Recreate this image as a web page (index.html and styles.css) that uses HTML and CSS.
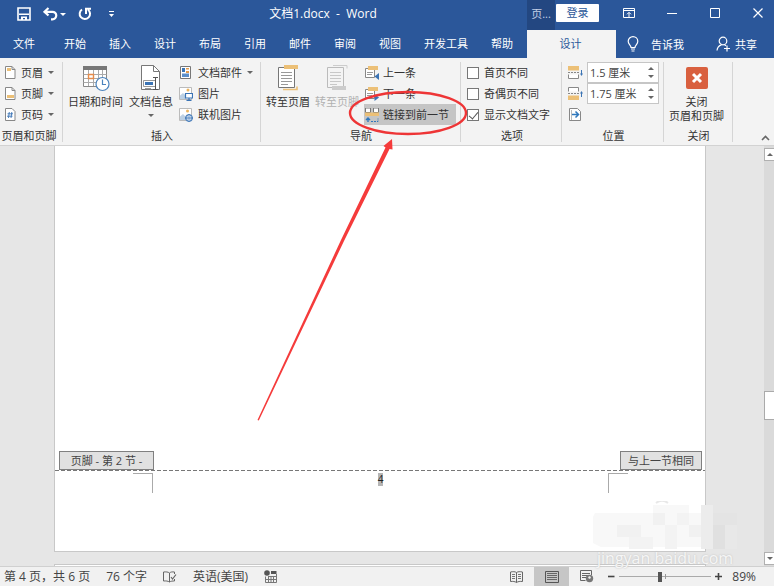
FILE: index.html
```html
<!DOCTYPE html>
<html lang="zh-CN">
  <head>
    <meta charset="utf-8">
    <title>文档1.docx - Word</title>
    <link rel="stylesheet" href="styles.css">
  </head>
  <body>
    <header class="titlebar">
      <div class="quick-access">
        <button type="button" aria-label="保存">
          <svg width="14" height="14" viewBox="0 0 14 14"><path d="M1 1h12v12H1z" fill="none" stroke="#fff" stroke-width="1.6"/><path d="M2 6.500h10v1.600H2zM4 9.500h6V13H8V11H6v2H4z" fill="#fff"/></svg>
        </button>
        <button type="button" class="undo" aria-label="撤消">
          <svg width="15" height="14" viewBox="0 0 15 14"><path d="M5.500 1L1.500 4.800l4 3.700M2 4.800h7.500a3.700 3.700 0 0 1 0 7.500H8" fill="none" stroke="#fff" stroke-width="2.200"/></svg>
          <span class="caret light"></span>
        </button>
        <button type="button" aria-label="恢复">
          <svg width="14" height="14" viewBox="0 0 14 14"><path d="M4 2.500A5.200 5.200 0 1 0 10 2.700M8 7V1.800h5" fill="none" stroke="#fff" stroke-width="2"/></svg>
        </button>
        <button type="button" class="customize" aria-label="自定义快速访问工具栏">
          <svg width="7" height="7" viewBox="0 0 7 7"><path d="M1 0.500h5" stroke="#fff"/><path d="M1 3h5L3.500 6z" fill="#fff"/></svg>
        </button>
      </div>
      <h1 class="doc-title">文档1.docx  -  Word</h1>
      <div class="title-right">
        <span class="context-label">页...</span>
        <button type="button" class="sign-in">登录</button>
        <div class="window-buttons">
          <button type="button" aria-label="功能区显示选项">
            <svg width="12" height="10" viewBox="0 0 12 10"><path d="M.5.5h11v9H.5zM.5 2.500h11M6 9V4.500M4 6.300L6 4.300l2 2" fill="none" stroke="#fff"/></svg>
          </button>
          <button type="button" aria-label="最小化">
            <svg width="12" height="10" viewBox="0 0 12 10"><path d="M1 5.500h10" stroke="#fff"/></svg>
          </button>
          <button type="button" aria-label="最大化">
            <svg width="12" height="10" viewBox="0 0 12 10"><path d="M1.500.5h9v9h-9z" fill="none" stroke="#fff"/></svg>
          </button>
          <button type="button" aria-label="关闭">
            <svg width="12" height="10" viewBox="0 0 12 10"><path d="M1.500.5l9 9M10.500.5l-9 9" stroke="#fff" stroke-width="1.200"/></svg>
          </button>
        </div>
      </div>
    </header>

    <nav class="tabs">
      <div class="tabs-main">
        <a href="#" class="file-tab">文件</a>
        <a href="#">开始</a>
        <a href="#">插入</a>
        <a href="#">设计</a>
        <a href="#">布局</a>
        <a href="#">引用</a>
        <a href="#">邮件</a>
        <a href="#">审阅</a>
        <a href="#">视图</a>
        <a href="#">开发工具</a>
        <a href="#">帮助</a>
      </div>
      <div class="tabs-right">
        <a href="#" class="active-tab">设计</a>
        <a href="#" class="tell-me">
          <svg width="12" height="16" viewBox="0 0 12 16"><path d="M4 11.500C4 9 1.200 8.500 1.200 5.300a4.800 4.600 0 0 1 9.600 0C10.800 8.500 8 9 8 11.500zM4 13h4M4.500 15h3" fill="none" stroke="#fff" stroke-width="1.200"/></svg>
          告诉我
        </a>
        <a href="#" class="share">
          <svg width="15" height="16" viewBox="0 0 15 16"><circle cx="7" cy="5" r="3.800" fill="none" stroke="#fff" stroke-width="1.200"/><path d="M1 14.500c.3-3 2-5 4.500-5.700M8.500 8.800l1.500 1M11 9.500v6M8 12.500h6" fill="none" stroke="#fff" stroke-width="1.200"/></svg>
          共享
        </a>
      </div>
    </nav>

    <section class="ribbon">
      <div class="group group-hf">
        <div class="group-body">
          <div class="rows">
            <button type="button" class="row">
              <svg width="12" height="14" viewBox="0 0 12 14"><path d="M1.500.5h6.500l3 3v9H1.500z" fill="#fff" stroke="#888"/><path d="M3 2h4v3H3z" fill="#ecc077"/><path d="M8 .5v3h3" fill="none" stroke="#888"/></svg>
              页眉 <span class="caret"></span>
            </button>
            <button type="button" class="row">
              <svg width="12" height="14" viewBox="0 0 12 14"><path d="M1.500.5h6.500l3 3v9H1.500z" fill="#fff" stroke="#888"/><path d="M3 8h7v3H3z" fill="#ecc077"/><path d="M8 .5v3h3" fill="none" stroke="#888"/></svg>
              页脚 <span class="caret"></span>
            </button>
            <button type="button" class="row">
              <svg width="12" height="14" viewBox="0 0 12 14"><path d="M1.500.5h6.500l3 3v9H1.500z" fill="#fff" stroke="#888"/><path d="M5.300 4l-.8 6M7.800 4L7 10M3.500 5.800h5.500M3 8.200h5.500" fill="none" stroke="#3b74b5" stroke-width=".9"/></svg>
              页码 <span class="caret"></span>
            </button>
          </div>
        </div>
        <div class="group-name">页眉和页脚</div>
      </div>

      <div class="group group-insert">
        <div class="group-body">
          <button type="button" class="big">
            <svg width="28" height="28" viewBox="0 0 28 28"><path d="M1.500 2.500h23v20h-23z" fill="#fff" stroke="#888"/><path d="M1 2h24v4H1z" fill="#777"/><path d="M1.500 10.500h23M1.500 14.500h23M1.500 18.500h23M6.500 6v16M11.500 6v16M16.500 6v16M20.500 6v16" stroke="#aaa"/><path d="M6.500 10.500h5v4h-5z" fill="#fff" stroke="#e58b4a" stroke-width="1.400"/><circle cx="20.500" cy="20" r="6.500" fill="#fff" stroke="#4a83bd" stroke-width="1.200"/><path d="M20.500 15.500v5H24" fill="none" stroke="#4a83bd" stroke-width="1.200"/></svg>
            日期和时间
          </button>
          <button type="button" class="big">
            <svg width="22" height="28" viewBox="0 0 22 28"><path d="M1.500 1.500h12l6 6v18h-18z" fill="#fff" stroke="#777"/><path d="M13.500 1.500v6h6" fill="none" stroke="#777"/><path d="M3.500 16.500h12v6h-12z" fill="#fff" stroke="#999"/><path d="M5 18h8v3H5z" fill="#3b74b5"/><path d="M5 24.500h6" stroke="#999"/><path d="M13 13.500h5M15.500 13.500v12M13 25.500h5" stroke="#555"/></svg>
            文档信息
            <span class="caret"></span>
          </button>
          <div class="rows">
            <button type="button" class="row">
              <svg width="14" height="14" viewBox="0 0 14 14"><path d="M1.500.5h10v12h-10z" fill="#fff" stroke="#777"/><path d="M3 2h3v4H3z" fill="#3b74b5"/><path d="M3 7.500h7V11H3z" fill="#5c8fca"/><path d="M7 2h3v1.500H7zM7 5h3v2H7z" fill="#e59b4a"/></svg>
              文档部件 <span class="caret"></span>
            </button>
            <button type="button" class="row">
              <svg width="14" height="14" viewBox="0 0 14 14"><path d="M.5.5h12v12H.5z" fill="#fff" stroke="#bbb"/><path d="M1 12V8.500L4 6l3 3v3z" fill="#bcd0e4"/><circle cx="9" cy="3" r="1.500" fill="#ecb560"/><path d="M6.500 6.500h7v4.500h-7zM10 11v2M7.500 13.300h5" fill="#fff" stroke="#3b74b5" stroke-width="1.200"/></svg>
              图片
            </button>
            <button type="button" class="row">
              <svg width="14" height="14" viewBox="0 0 14 14"><path d="M.5.5h12v12H.5z" fill="#fff" stroke="#bbb"/><path d="M1 12V8.500L4 6l3 3v3z" fill="#bcd0e4"/><circle cx="8.500" cy="3" r="1.500" fill="#ecb560"/><circle cx="10" cy="10" r="3.500" fill="#fff" stroke="#3b74b5"/><path d="M6.500 10h7M10 6.500v7M8.500 7c-1 2-1 4 0 6M11.500 7c1 2 1 4 0 6" fill="none" stroke="#3b74b5" stroke-width=".8"/></svg>
              联机图片
            </button>
          </div>
        </div>
        <div class="group-name">插入</div>
      </div>

      <div class="group group-nav">
        <div class="group-body">
          <button type="button" class="big">
            <svg width="22" height="28" viewBox="0 0 22 28"><path d="M1.500 3.500h16v20h-16z" fill="#fff" stroke="#777"/><path d="M7 1h14v4H7z" fill="#ecc077"/><path d="M4 8.500h11M4 11.500h11M4 14.500h11M4 17.500h11M4 20.500h7" stroke="#999"/><path d="M6 25.500h14v-3" fill="none" stroke="#ecc077" stroke-width="1.600"/></svg>
            转至页眉
          </button>
          <button type="button" class="big" disabled>
            <svg width="22" height="28" viewBox="0 0 22 28"><path d="M1.500 3.500h16v20h-16z" fill="#f4f4f4" stroke="#bbb"/><path d="M7 1.500h14v3" fill="none" stroke="#ccc"/><path d="M4 8.500h11M4 11.500h11M4 14.500h11M4 17.500h11M4 20.500h7" stroke="#c8c8c8"/><path d="M6 22h14v4H6z" fill="#ccc"/></svg>
            转至页脚
          </button>
          <div class="rows">
            <button type="button" class="row">
              <svg width="14" height="14" viewBox="0 0 14 14"><path d="M.5 2.500h9v9h-9z" fill="#fff" stroke="#888"/><path d="M3 0h10v4H3z" fill="#ecc077"/><path d="M2 6.500h6M2 8.500h5" stroke="#999"/><path d="M14 7v7l-4.500-3.500z" fill="#3b74b5"/></svg>
              上一条
            </button>
            <button type="button" class="row">
              <svg width="14" height="14" viewBox="0 0 14 14"><path d="M.5 2.500h9v9h-9z" fill="#fff" stroke="#888"/><path d="M3 0h10v4H3z" fill="#ecc077"/><path d="M2 6.500h6M2 8.500h5" stroke="#999"/><path d="M9.500 7v7l4.500-3.500z" fill="#3b74b5"/></svg>
              下一条
            </button>
            <button type="button" class="row pressed" aria-pressed="true">
              <svg width="14" height="14" viewBox="0 0 14 14"><path d="M.5 0h5v4.500h-5zM8.500 0h5v4.500h-5z" fill="#fff" stroke="#777"/><path d="M0 4.500h14V8H0z" fill="#ecc077"/><path d="M3 14v-4M1 12l2-2 2 2" fill="none" stroke="#2f78bd" stroke-width="1.400"/><path d="M6 13.500h7v-3" fill="none" stroke="#2f78bd" stroke-dasharray="2 1"/></svg>
              链接到前一节
            </button>
          </div>
        </div>
        <div class="group-name">导航</div>
      </div>

      <div class="group group-options">
        <div class="group-body">
          <div class="rows">
            <label class="row"><input type="checkbox"> 首页不同</label>
            <label class="row"><input type="checkbox"> 奇偶页不同</label>
            <label class="row"><input type="checkbox" checked> 显示文档文字</label>
          </div>
        </div>
        <div class="group-name">选项</div>
      </div>

      <div class="group group-position">
        <div class="group-body">
          <div class="rows">
            <div class="row">
              <svg width="16" height="14" viewBox="0 0 16 14"><path d="M0 0h11v4.500H0z" fill="#ecc077"/><path d="M0 6.500h11" stroke="#888" stroke-dasharray="2 1"/><path d="M.5 8.500v4h10v-4" fill="#fff" stroke="#888"/><path d="M13.500 4v5" stroke="#3b74b5"/><path d="M12 7.500h3l-1.500 2.500z" fill="#3b74b5"/></svg>
              <div class="spinner">
                <input type="text" value="1.5 厘米" aria-label="页眉顶端距离">
                <div class="steps">
                  <button type="button" aria-label="增加"><span class="caret up"></span></button>
                  <button type="button" aria-label="减少"><span class="caret"></span></button>
                </div>
              </div>
            </div>
            <div class="row">
              <svg width="16" height="14" viewBox="0 0 16 14"><path d="M.5 4.500v-4h10v4" fill="#fff" stroke="#888"/><path d="M0 6.500h11" stroke="#888" stroke-dasharray="2 1"/><path d="M0 8.500h11V13H0z" fill="#ecc077"/><path d="M13.500 5v5" stroke="#3b74b5"/><path d="M12 6.500h3l-1.500-2.500z" fill="#3b74b5"/></svg>
              <div class="spinner">
                <input type="text" value="1.75 厘米" aria-label="页脚底端距离">
                <div class="steps">
                  <button type="button" aria-label="增加"><span class="caret up"></span></button>
                  <button type="button" aria-label="减少"><span class="caret"></span></button>
                </div>
              </div>
            </div>
            <button type="button" class="row" aria-label="插入对齐制表符">
              <svg width="16" height="14" viewBox="0 0 16 14"><path d="M1.500.5h8l3 3v9h-11z" fill="#fff" stroke="#888"/><path d="M3.500 2v10" stroke="#bbb"/><path d="M4 6.500h6.500M7.500 3.500l3 3-3 3" fill="none" stroke="#2f78bd" stroke-width="1.500"/></svg>
            </button>
          </div>
        </div>
        <div class="group-name">位置</div>
      </div>

      <div class="group group-close">
        <div class="group-body">
          <button type="button" class="big">
            <svg width="24" height="28" viewBox="0 0 24 28"><rect x="1" y="3" width="22" height="22" rx="2" fill="#d9603f"/><path d="M8 10l8 8M16 10l-8 8" stroke="#fff" stroke-width="3"/></svg>
            <span class="two-lines">关闭<br>页眉和页脚</span>
          </button>
        </div>
        <div class="group-name">关闭</div>
      </div>

      <button type="button" class="collapse" aria-label="折叠功能区">
        <svg width="9" height="6" viewBox="0 0 9 6"><path d="M1 5l3.500-3.500L8 5" fill="none" stroke="#666" stroke-width="1.600"/></svg>
      </button>
    </section>

    <main class="workspace">
      <div class="pages">
        <article class="page">
          <div class="page-body"></div>
          <div class="footer-tags">
            <span class="tag tag-footer">页脚 - 第 2 节 -</span>
            <span class="tag">与上一节相同</span>
          </div>
          <div class="footer-area">
            <span class="corner corner-left"></span>
            <span class="page-number">4</span>
            <span class="corner corner-right"></span>
          </div>
        </article>
        <article class="page next-page"></article>
      </div>
      <div class="scrollbar">
        <button type="button" aria-label="向上滚动"><span class="caret up"></span></button>
        <div class="track-above"></div>
        <div class="thumb"></div>
        <div class="track-below"></div>
        <button type="button" aria-label="向下滚动"><span class="caret"></span></button>
      </div>
      <div class="watermark">
        <svg width="144" height="48" viewBox="0 0 144 48">
          <path d="M63 2c4-3 8-3 12 0" fill="none" stroke="#e8e8e8" stroke-width="2"/>
          <path d="M2 12h118v34H8l-8-4V16z" fill="#f8f8f8"/>
          <path d="M60 4h36v8H60zM108 4h12v8h-12z" fill="#f8f8f8"/>
          <path d="M24 24h24v12H24zM60 12h12v12H60zM96 24h12v12H96z" fill="#f1f1f1"/>
          <path d="M36 36h24v12H36zM72 24h12v24H72zM84 12h12v12H84z" fill="#f3f3f3"/>
          <path d="M108 4h12v44h-12z" fill="#ececec"/>
          <path d="M120 12h24v12h-24z" fill="#e4e4e4"/>
          <path d="M120 24h12v24h-12z" fill="#e0e0e0"/>
          <path d="M132 24h12v24h-12z" fill="#e8e8e8"/>
        </svg>
        <span>jingyan.baidu.com</span>
      </div>
    </main>

    <footer class="statusbar">
      <span>第 4 页，共 6 页</span>
      <span>76 个字</span>
      <svg width="14" height="12" viewBox="0 0 14 12"><path d="M6.500 2v9M6.500 2C5 .8 3 .8.500 1v9c2.500-.2 4.500 0 6 1 1.500-1 3-1 5-1V8M6.500 2C8 .8 9 .8 11.500 1v2" fill="none" stroke="#666"/><path d="M8 6l1.500 2L13 3.500" fill="none" stroke="#666" stroke-width="1.200"/></svg>
      <span>英语(美国)</span>
      <svg width="13" height="13" viewBox="0 0 13 13"><circle cx="3" cy="3" r="2.800" fill="#555"/><path d="M7 1h5.500v3H7z" fill="#555"/><path d="M1.500 6.500v6h11V4M4 6.500h8M2 9.500h10M4.500 6v6M7 6v6M9.500 6v6" fill="none" stroke="#777"/></svg>
      <div class="views">
        <button type="button" aria-label="阅读视图">
          <svg width="13" height="12" viewBox="0 0 13 12"><path d="M6.500 1.500v10M6.500 1.500C5 .5 3 .5.500 1v9.500c2.500-.3 4.500 0 6 1 1.500-1 3.500-1.300 6-1V1c-2.500-.5-4.500-.5-6 .5" fill="none" stroke="#666"/><path d="M2 3.500h3M2 5.500h3M2 7.500h3M8 3.500h3M8 5.500h3M8 7.500h3" stroke="#777"/></svg>
        </button>
        <button type="button" class="current" aria-label="页面视图">
          <svg width="14" height="12" viewBox="0 0 14 12"><path d="M.5.5h13v11H.5z" fill="none" stroke="#555"/><path d="M2 2.500h10M2 4.500h10M2 6.500h10M2 8.500h10" stroke="#666"/></svg>
        </button>
        <button type="button" aria-label="Web 版式视图">
          <svg width="14" height="13" viewBox="0 0 14 13"><path d="M11.500 5V.5H.5v10h5M2 3.500h8M2 5.500h6M2 7.500h4" fill="none" stroke="#666"/><circle cx="9.500" cy="8.500" r="3.700" fill="#777"/><path d="M8 7l2-1 1 2-2 1z" fill="#f1f1f1"/></svg>
        </button>
      </div>
      <div class="zoom">
        <button type="button" aria-label="缩小"><svg width="7" height="7" viewBox="0 0 7 7"><path d="M0 3.500h6.500" stroke="#444" stroke-width="1.600"/></svg></button>
        <input type="range" min="0" max="100" value="44" aria-label="显示比例">
        <button type="button" aria-label="放大"><svg width="7" height="7" viewBox="0 0 7 7"><path d="M0 3.500h7M3.500 0v7" stroke="#444" stroke-width="1.600"/></svg></button>
        <span class="percent">89%</span>
      </div>
    </footer>

    <svg class="markup" width="774" height="586" viewBox="0 0 774 586">
      <ellipse cx="408" cy="113" rx="58" ry="21" fill="none" stroke="#ee3536" stroke-width="2.400"/>
      <path d="M257.500 420L341 240L385.500 147.500L383.500 146L392 139L392.500 149.500L389.500 149L344 241L258.800 420.500z" fill="#f53b3b"/>
    </svg>
  </body>
</html>
```
FILE: styles.css
```css
* {
  box-sizing: border-box;
}
body {
  display: flex;
  flex-direction: column;
  position: relative;
  height: 100vh;
  margin: 0;
  overflow: hidden;
  font: 11px/16px "Open Sans", "Noto Sans CJK SC", sans-serif;
  color: #333;
  background: #e6e6e6;
}
button, input {
  font: inherit;
  color: inherit;
}
button {
  padding: 0;
  border: 0;
  background: none;
}
a {
  color: #fff;
  text-decoration: none;
}
svg {
  display: block;
  flex: none;
}
.caret {
  display: block;
  flex: none;
  border: 3px solid transparent;
  border-top-color: #666;
  border-bottom: 0;
}
.caret.up {
  border-top: 0;
  border-bottom: 3px solid #666;
}
.caret.light {
  border-top-color: #fff;
}

/* title bar */
.titlebar {
  display: flex;
  flex: none;
  height: 30px;
  color: #fff;
  background: #2b579a;
}
.quick-access {
  display: flex;
  align-items: center;
  gap: 12px;
  padding: 0 0 2px 17px;
}
.undo {
  display: flex;
  align-items: center;
  gap: 2px;
}
.customize {
  margin-left: 4px;
}
.doc-title {
  flex: 1;
  margin: 0;
  padding-left: 4px;
  font-size: 12px;
  font-weight: normal;
  line-height: 28px;
  text-align: center;
  white-space: pre;
}
.title-right {
  display: flex;
  width: 247px;
}
.context-label {
  width: 28px;
  line-height: 28px;
  text-align: center;
  color: #c3d0e6;
  background: #234781;
}
.sign-in {
  width: 43px;
  height: 18px;
  margin: 4px 0 0 1px;
  color: #2b579a;
  background: #fff;
  border-radius: 1px;
}
.window-buttons {
  display: flex;
  flex: 1;
  align-items: center;
  justify-content: flex-end;
  gap: 31px;
  padding: 0 10px 4px 0;
}

/* tab strip */
.tabs {
  display: flex;
  flex: none;
  height: 28px;
  line-height: 27px;
  background: #2b579a;
}
.tabs-main {
  display: flex;
  flex: 1;
  gap: 23px;
  padding-left: 13px;
}
.file-tab {
  margin-right: 6px;
}
.tabs-right {
  display: flex;
  width: 247px;
}
.active-tab {
  width: 89px;
  padding-right: 2px;
  text-align: center;
  color: #2b579a;
  background: #f3f3f3;
}
.tell-me,
.share {
  display: flex;
  align-items: center;
}
.tell-me {
  gap: 12px;
  margin-left: 11px;
}
.share {
  gap: 4px;
  margin: 0 17px 0 auto;
}

/* ribbon */
.ribbon {
  display: flex;
  flex: none;
  height: 88px;
  padding-top: 4px;
  background: #f3f3f3;
  border-bottom: 1px solid #d2d2d2;
}
.group {
  display: flex;
  flex: none;
  flex-direction: column;
  height: 80px;
  border-right: 1px solid #d5d5d5;
}
.group-hf {
  width: 63px;
}
.group-hf .group-body {
  padding-left: 4px;
}
.group-insert {
  width: 198px;
  padding-left: 5px;
}
.group-nav {
  width: 200px;
  padding-left: 5px;
}
.group-options {
  width: 101px;
  padding-left: 6px;
}
.group-position {
  width: 102px;
  padding-left: 6px;
}
.group-close {
  width: 69px;
  padding-left: 5px;
}
.group-body {
  display: flex;
  flex: none;
  gap: 5px;
  height: 62px;
}
.group-insert .group-body {
  gap: 6px;
}
.group-name {
  margin: 3px 4px 0 0;
  line-height: 18px;
  text-align: center;
  white-space: nowrap;
}
.rows {
  display: flex;
  flex-direction: column;
}
.row {
  display: flex;
  flex: none;
  align-items: center;
  gap: 5px;
  height: 21px;
  white-space: nowrap;
}
.big {
  display: flex;
  flex-direction: column;
  align-items: center;
  padding-top: 2px;
  line-height: 20px;
  white-space: nowrap;
}
.big .caret {
  margin-top: 2px;
}
.big:disabled {
  color: #b1b1b1;
}
.two-lines {
  line-height: 14px;
  padding-top: 3px;
}
.group-nav .row {
  gap: 4px;
  padding: 0 7px 0 1px;
}
.group-position .row {
  gap: 3px;
}
.pressed {
  background: #c5c5c5;
}
.row input[type="checkbox"] {
  appearance: none;
  width: 12px;
  height: 12px;
  margin: 0;
  background: #fff;
  border: 1px solid #777;
}
.row input[type="checkbox"]:checked::before {
  content: "";
  display: block;
  width: 4px;
  height: 8px;
  margin: 0 0 0 3px;
  border: solid #555;
  border-width: 0 1px 1px 0;
  transform: rotate(40deg);
}
.spinner {
  display: flex;
  width: 72px;
  height: 21px;
  background: #fff;
  border: 1px solid #c6c6c6;
}
.spinner input {
  flex: 1;
  min-width: 0;
  padding: 0 0 0 2px;
  color: #444;
  border: 0;
  background: none;
}
.steps {
  display: flex;
  flex-direction: column;
  justify-content: center;
  gap: 5px;
  padding-right: 4px;
}
.collapse {
  align-self: flex-end;
  margin: 0 4px 4px auto;
}

/* document */
.workspace {
  display: flex;
  flex: 1;
  position: relative;
  min-height: 0;
}
.pages {
  display: flex;
  flex: 1;
  flex-direction: column;
  gap: 12px;
  padding: 0 58px 0 54px;
}
.page {
  display: flex;
  flex: 1;
  flex-direction: column;
  background: #fff;
  border: 1px solid #c8c8c8;
  border-top: 0;
}
.next-page {
  flex: none;
  height: 2px;
  border-top: 1px solid #c8c8c8;
  border-bottom: 0;
}
.page-body {
  flex: 1;
}
.footer-tags {
  display: flex;
  justify-content: space-between;
  padding: 0 3px 0 4px;
}
.tag {
  padding: 0 7px;
  line-height: 17px;
  text-align: center;
  white-space: pre;
  color: #444;
  background: #e1e1e1;
  border: 1px solid #808080;
}
.tag-footer {
  min-width: 95px;
}
.footer-area {
  display: flex;
  justify-content: space-between;
  height: 81px;
  padding: 3px 77px 0 78px;
  background: repeating-linear-gradient(90deg, #777 0 4px, transparent 4px 6px) 0 0 / 100% 1px no-repeat;
}
.corner {
  width: 20px;
  height: 20px;
  border-top: 1px solid #aaa;
}
.corner-left {
  border-right: 1px solid #aaa;
}
.corner-right {
  border-left: 1px solid #aaa;
}
.page-number {
  height: 13px;
  font-size: 10px;
  line-height: 13px;
  color: #222;
  background: #b5b5b5;
}
.scrollbar {
  display: flex;
  flex-direction: column;
  width: 10px;
  padding: 2px 0 1px;
  background: #dadada;
}
.scrollbar button {
  display: flex;
  align-items: center;
  justify-content: center;
  height: 13px;
  background: #fff;
  border: 1px solid #b0b0b0;
  border-right: 0;
}
.track-above {
  flex: 231;
}
.track-below {
  flex: 132;
}
.thumb {
  height: 29px;
  background: #fff;
  border: 1px solid #aaa;
  border-right: 0;
}
.watermark {
  position: absolute;
  right: 37px;
  bottom: -5px;
  z-index: 1;
}
.watermark span {
  display: block;
  height: 22px;
  padding-left: 4px;
  font: 16px/18px "Open Sans", sans-serif;
  color: #f6f6f6;
  text-shadow: 0 0 2px #bbb;
}

/* status bar */
.statusbar {
  display: flex;
  flex: none;
  align-items: center;
  gap: 16px;
  height: 20px;
  padding-left: 4px;
  font-size: 12px;
  color: #444;
  background: #f1f1f1;
  border-top: 1px solid #d0d0d0;
}
.views {
  display: flex;
  align-items: center;
  align-self: stretch;
  gap: 11px;
  margin-left: auto;
}
.views .current {
  display: flex;
  align-items: center;
  justify-content: center;
  align-self: stretch;
  width: 35px;
  background: #c6c6c6;
}
.zoom {
  display: flex;
  align-items: center;
  gap: 4px;
  margin-left: -2px;
  padding-right: 18px;
}
.zoom input {
  appearance: none;
  width: 92px;
  height: 10px;
  margin: 0;
  background:
    linear-gradient(#999, #999) 50% 50% / 1px 5px no-repeat,
    linear-gradient(#aaa, #aaa) 0 50% / 100% 1px no-repeat;
}
.zoom input::-webkit-slider-thumb {
  appearance: none;
  width: 4px;
  height: 10px;
  background: #555;
}
.percent {
  margin-left: 6px;
}

/* hand-drawn highlight over the link button */
.markup {
  position: absolute;
  top: 0;
  left: 0;
  pointer-events: none;
}
```
